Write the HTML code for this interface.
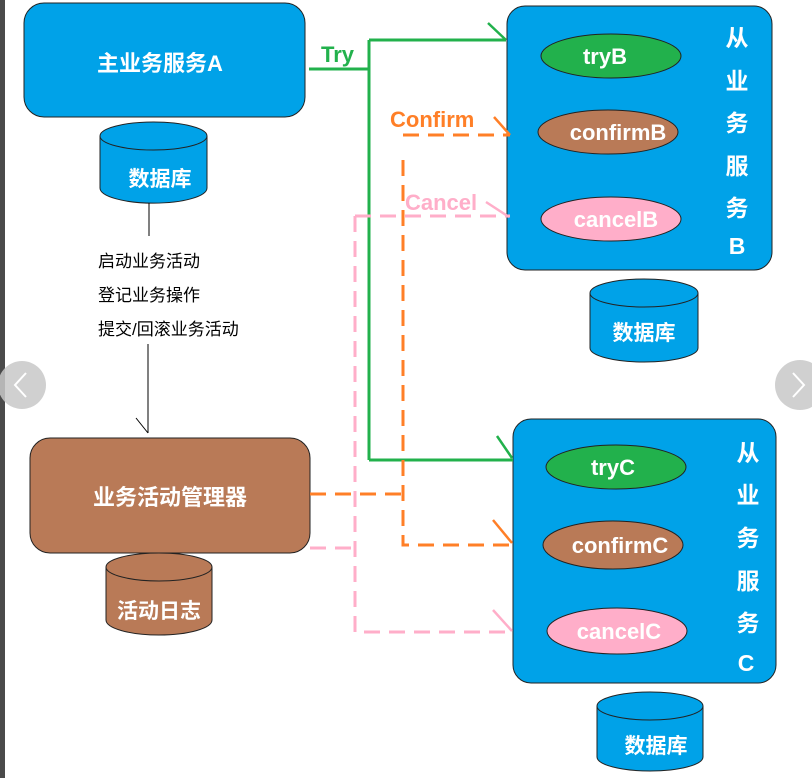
<!DOCTYPE html>
<html><head><meta charset="utf-8"><style>
html,body{margin:0;padding:0;background:#fff;width:812px;height:778px;overflow:hidden}
text{font-family:"Liberation Sans","Noto Sans CJK SC",sans-serif}
</style></head><body>
<svg width="812" height="778" viewBox="0 0 812 778" xmlns="http://www.w3.org/2000/svg">
<rect x="0" y="0" width="5" height="778" fill="#4a4a4a"/>
<rect x="24" y="3" width="281" height="114" rx="20" fill="#00a2e8" stroke="#222" stroke-width="1"/>
<text x="160" y="71" font-size="22" font-weight="bold" fill="#fff" text-anchor="middle">主业务服务A</text>
<g stroke="#222" stroke-width="1">
<path d="M100,136 L100,188 A53,15 0 0 0 207,188 L207,136" fill="#00a2e8"/>
<ellipse cx="153.5" cy="136" rx="53.5" ry="14" fill="#00a2e8"/>
</g>
<text x="160" y="186" font-size="21" font-weight="bold" fill="#fff" text-anchor="middle">数据库</text>
<line x1="149" y1="203" x2="149" y2="236" stroke="#000"/>
<text x="98" y="267" font-size="17" fill="#000">启动业务活动</text>
<text x="98" y="301" font-size="17" fill="#000">登记业务操作</text>
<text x="98" y="335" font-size="17" fill="#000">提交/回滚业务活动</text>
<line x1="148" y1="344" x2="148" y2="433" stroke="#000"/>
<line x1="136" y1="418" x2="148" y2="433" stroke="#000"/>
<rect x="30" y="438" width="280" height="115" rx="20" fill="#b97a57" stroke="#222"/>
<text x="170" y="505" font-size="22" font-weight="bold" fill="#fff" text-anchor="middle">业务活动管理器</text>
<g stroke="#222">
<path d="M106,567 L106,620 A53,15 0 0 0 212,620 L212,567" fill="#b97a57"/>
<ellipse cx="159" cy="567" rx="53" ry="14" fill="#b97a57"/>
</g>
<text x="159" y="618" font-size="21" font-weight="bold" fill="#fff" text-anchor="middle">活动日志</text>
<rect x="507" y="6" width="265" height="264" rx="18" fill="#00a2e8" stroke="#222"/>
<ellipse cx="611" cy="56" rx="70" ry="22" fill="#22b14c" stroke="#222"/>
<text x="605" y="64" font-size="22" font-weight="bold" fill="#fff" text-anchor="middle">tryB</text>
<ellipse cx="608" cy="132" rx="70" ry="22" fill="#b97a57" stroke="#222"/>
<text x="618" y="140" font-size="22" font-weight="bold" fill="#fff" text-anchor="middle">confirmB</text>
<ellipse cx="611" cy="219" rx="70" ry="22" fill="#ffaec9" stroke="#222"/>
<text x="616" y="227" font-size="22" font-weight="bold" fill="#fff" text-anchor="middle">cancelB</text>
<g font-size="23" font-weight="bold" fill="#fff" text-anchor="middle">
<text x="737" y="46">从</text><text x="737" y="89">业</text><text x="737" y="131">务</text><text x="737" y="174">服</text><text x="737" y="216">务</text><text x="737" y="254">B</text>
</g>
<g stroke="#222">
<path d="M590,293 L590,348 A54,14 0 0 0 698,348 L698,293" fill="#00a2e8"/>
<ellipse cx="644" cy="293" rx="54" ry="14" fill="#00a2e8"/>
</g>
<text x="644" y="340" font-size="21" font-weight="bold" fill="#fff" text-anchor="middle">数据库</text>
<rect x="513" y="419" width="263" height="264" rx="18" fill="#00a2e8" stroke="#222"/>
<ellipse cx="616" cy="467" rx="70" ry="22" fill="#22b14c" stroke="#222"/>
<text x="613" y="475" font-size="22" font-weight="bold" fill="#fff" text-anchor="middle">tryC</text>
<ellipse cx="613" cy="545" rx="70" ry="24" fill="#b97a57" stroke="#222"/>
<text x="620" y="553" font-size="22" font-weight="bold" fill="#fff" text-anchor="middle">confirmC</text>
<ellipse cx="617" cy="631" rx="70" ry="23" fill="#ffaec9" stroke="#222"/>
<text x="619" y="639" font-size="22" font-weight="bold" fill="#fff" text-anchor="middle">cancelC</text>
<g font-size="23" font-weight="bold" fill="#fff" text-anchor="middle">
<text x="748" y="461">从</text><text x="748" y="503">业</text><text x="748" y="546">务</text><text x="748" y="589">服</text><text x="748" y="631">务</text><text x="746" y="671">C</text>
</g>
<g stroke="#222">
<path d="M597,706 L597,757 A53,14 0 0 0 703,757 L703,706" fill="#00a2e8"/>
<ellipse cx="650" cy="706" rx="53" ry="14" fill="#00a2e8"/>
</g>
<text x="656" y="753" font-size="21" font-weight="bold" fill="#fff" text-anchor="middle">数据库</text>
<g stroke="#22b14c" stroke-width="3" fill="none">
<path d="M309,69 L369,69 M369,40 L369,460 M369,40 L506,40 M369,460 L513,460"/>
<path d="M488,23 L506,40 M497,436 L512,458" stroke-width="2.5"/>
</g>
<text x="321" y="62" font-size="22" font-weight="bold" fill="#22b14c">Try</text>
<g stroke="#ff7f27" stroke-width="3" fill="none" stroke-dasharray="16,9">
<path d="M403,135 L510,135 M403,160 L403,545 L513,545 M310,494 L403,494"/>
</g>
<path d="M494,117 L510,135 M493,520 L512,543" stroke="#ff7f27" stroke-width="2.5" fill="none"/>
<text x="390" y="127" font-size="22" font-weight="bold" fill="#ff7f27">Confirm</text>
<g stroke="#ffaec9" stroke-width="3" fill="none" stroke-dasharray="16,9">
<path d="M355,216 L510,216 M355,216 L355,632 L513,632 M310,548 L355,548"/>
</g>
<path d="M486,202 L509,217 M493,610 L512,631" stroke="#ffaec9" stroke-width="2.5" fill="none"/>
<text x="405" y="210" font-size="22" font-weight="bold" fill="#ffaec9">Cancel</text>
<circle cx="22" cy="385" r="24" fill="#c8c8c8" opacity="0.85"/>
<path d="M26,373 L15,385 L26,397" stroke="#fff" stroke-width="2" fill="none"/>
<circle cx="800" cy="385" r="25" fill="#c8c8c8" opacity="0.85"/>
<path d="M793,373 L804,385 L793,397" stroke="#fff" stroke-width="2" fill="none"/>
</svg>
</body></html>
